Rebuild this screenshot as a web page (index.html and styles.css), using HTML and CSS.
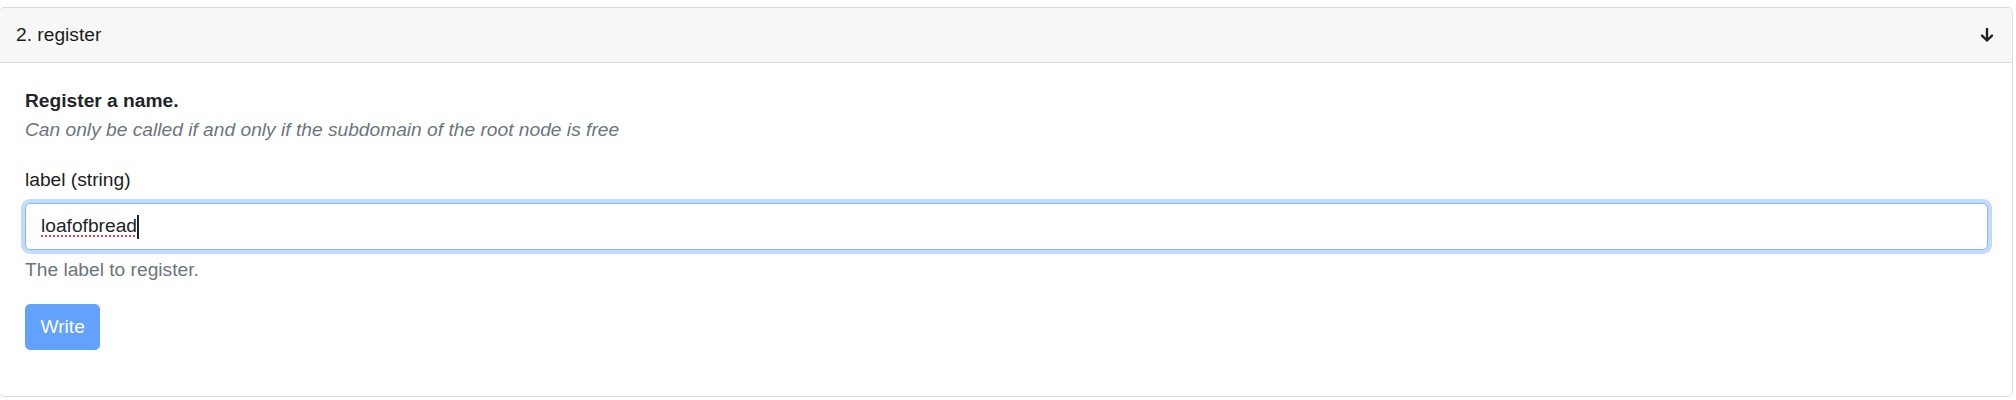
FILE: index.html
```html
<!DOCTYPE html>
<html lang="en">
<head>
<meta charset="utf-8">
<title>register</title>
<link rel="stylesheet" href="styles.css">
</head>
<body>
<div class="card">
  <div class="card-header">
    <span class="card-title">2. register</span>
    <svg class="arrow" width="16" height="16" viewBox="0 0 16 16" aria-hidden="true">
      <path d="M8 2 V13.5 M3 8.6 L8 13.5 L13 8.6" fill="none" stroke="#212529" stroke-width="2.4" stroke-linecap="round" stroke-linejoin="round"/>
    </svg>
  </div>
  <div class="card-body">
    <div class="method-title">Register a name.</div>
    <p class="method-desc">Can only be called if and only if the subdomain of the root node is free</p>
    <div class="field">
      <label class="field-label">label (string)</label>
      <div class="form-control focused"><span class="misspelled">loafofbread</span><span class="caret"></span></div>
      <div class="field-help">The label to register.</div>
    </div>
    <div class="actions">
      <button class="btn-write" type="button" disabled>Write</button>
    </div>
  </div>
</div>
</body>
</html>
```

FILE: styles.css
```css
* {
  box-sizing: border-box;
}

html, body {
  margin: 0;
  padding: 0;
  background: #ffffff;
}

body {
  font-family: "Liberation Sans", Arial, Helvetica, sans-serif;
  font-size: 19.2px;
  line-height: 1.5;
  color: #212529;
}

.card {
  margin: 7px 3px 0 -1px;
  border: 1px solid #dcdcdc;
  border-radius: 5px;
  background: #ffffff;
}

.card-header {
  display: flex;
  align-items: center;
  justify-content: space-between;
  padding: 12.6px 17px 12.6px 16px;
  background: #f7f7f8;
  border-bottom: 1px solid #d9d9db;
  border-radius: 5px 5px 0 0;
}

.card-title {
  color: #1a1d20;
}

.arrow {
  display: block;
}

.card-body {
  padding: 24px 24px 24px 25px;
}

.method-title {
  font-weight: 700;
  color: #212529;
}

.method-desc {
  margin: 0 0 21.5px 0;
  font-style: italic;
  color: #6c757d;
}

.field-label {
  display: block;
  margin-bottom: 8.5px;
  color: #1a1d20;
}

.form-control {
  display: flex;
  align-items: center;
  height: 47px;
  padding: 0 15px;
  border: 1px solid #86b7fe;
  border-radius: 5px;
  background: #ffffff;
  color: #212529;
}

.form-control.focused {
  box-shadow: 0 0 0 4px rgba(13, 110, 253, 0.25);
}

.misspelled {
  text-decoration-line: underline;
  text-decoration-style: dotted;
  text-decoration-color: #e0413a;
  text-decoration-thickness: 2px;
  text-underline-offset: 3px;
}

.caret {
  display: inline-block;
  width: 2px;
  height: 24px;
  background: #212529;
  margin-left: 0;
}

.field-help {
  margin-top: 6px;
  color: #6c757d;
}

.actions {
  margin-top: 19px;
  margin-bottom: 21.5px;
}

.btn-write {
  font-family: inherit;
  font-size: 19.2px;
  line-height: 1.5;
  color: #ffffff;
  background: #62a1fc;
  border: 1px solid #62a1fc;
  border-radius: 5px;
  padding: 7.6px 14.4px;
  cursor: default;
}
```
